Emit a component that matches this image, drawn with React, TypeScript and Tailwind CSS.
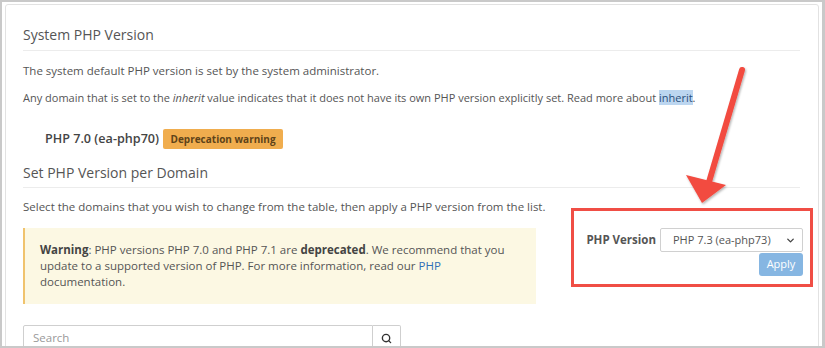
import { Search, ChevronDown } from "lucide-react";

function App() {
  return (
    <div className="relative h-[348px] w-[825px] overflow-hidden bg-white border-t-[2px] border-l-[2px] border-r-[3px] border-b-[2px] border-[#c9c9c9] font-['Open_Sans',sans-serif] text-[#555]">
      <div className="ml-[3px] mt-[2px] mr-[3px] h-[400px] rounded-[3px] border border-[#e2e2e2] bg-white pl-[17px] pr-[18px] pt-[20px]">
        <div className="border-b border-[#ececec] pb-[5px]">
          <h2 className="h-[20px] text-[14px] leading-[20px] text-[#555]">System PHP Version</h2>
        </div>
        <p className="mt-[11px] text-[11.5px] leading-[17px]">
          The system default PHP version is set by the system administrator.
        </p>
        <p className="mt-[10px] text-[11px] leading-[17px]">
          Any domain that is set to the <i>inherit</i> value indicates that it does not have its own PHP version explicitly set. Read more about{" "}
          <span className="bg-[#bcd6f0] text-[#2a4f7a]">inherit</span>.
        </p>

        <div className="mt-[23px] ml-[22px] flex h-[20px] items-center gap-[4px]">
          <span className="text-[12.6px] font-semibold text-[#444]">PHP 7.0 (ea-php70)</span>
          <span className="flex h-[20px] w-[120px] items-center justify-center rounded-[2px] bg-[#f0ad4e] text-[10px] font-bold text-[#5e4319]">
            Deprecation warning
          </span>
        </div>

        <div className="mt-[14px] border-b border-[#ececec] pb-[4px]">
          <h2 className="h-[20px] text-[14px] leading-[20px] text-[#555]">Set PHP Version per Domain</h2>
        </div>
        <p className="mt-[10px] text-[11.5px] leading-[17px]">
          Select the domains that you wish to change from the table, then apply a PHP version from the list.
        </p>

        <div className="mt-[13px] flex items-start justify-between">
          <div className="w-[513px] border-l-[2px] border-[#f0c36d] bg-[#fcf8e3] py-[14px] pl-[15px] pr-[28px] text-[11.5px] leading-[16px] text-[#555]">
            <b className="text-[#444]">Warning</b>: PHP versions PHP 7.0 and PHP 7.1 are <b className="text-[#444]">deprecated</b>. We recommend that you update to a supported version of PHP. For more information, read our{" "}
            <span className="text-[#2f6fb7]">PHP</span> documentation.
          </div>

          <div className="relative mr-[-3px] flex flex-col items-end">
            <div className="pointer-events-none absolute left-[-15px] top-[-20px] right-[-10px] bottom-[-11px] border-[3px] border-[#f04e45]" />
            <div className="flex items-center gap-[4px]">
              <span className="text-[11.5px] font-bold text-[#555]">PHP Version</span>
              <div className="flex h-[24px] w-[143px] items-center justify-between rounded-[2px] border border-[#d0d0d0] bg-white pl-[12px] pr-[6px] text-[11px] text-[#555]">
                <span>PHP 7.3 (ea-php73)</span>
                <ChevronDown size={11} strokeWidth={3} className="text-[#444]" />
              </div>
            </div>
            <button className="mt-[1px] flex h-[23px] w-[44px] items-center justify-center rounded-[3px] bg-[#86b6e2] text-[11px] text-white">
              Apply
            </button>
          </div>
        </div>

        <div className="mt-[21px] flex">
          <div className="flex h-[26px] w-[350px] items-center rounded-l-[2px] border border-[#cfcfcf] px-[9px] text-[11.5px] text-[#999]">
            Search
          </div>
          <div className="flex h-[26px] w-[28px] items-center justify-center rounded-r-[2px] border border-l-0 border-[#cfcfcf]">
            <Search size={11} strokeWidth={3} className="text-[#333]" />
          </div>
        </div>
      </div>

      <svg className="pointer-events-none absolute left-0 top-0" width="825" height="348" viewBox="0 0 825 348">
        <defs>
          <filter id="sh" x="-20%" y="-20%" width="140%" height="140%">
            <feDropShadow dx="1" dy="1.5" stdDeviation="1.2" floodColor="#000" floodOpacity="0.3" />
          </filter>
        </defs>
        <g filter="url(#sh)">
          <line x1="740" y1="68" x2="707" y2="180" stroke="#f24b40" strokeWidth="6" strokeLinecap="round" />
          <polygon points="700,201 684,173 724,183" fill="#f24b40" />
        </g>
      </svg>
    </div>
  );
}

export default App;
